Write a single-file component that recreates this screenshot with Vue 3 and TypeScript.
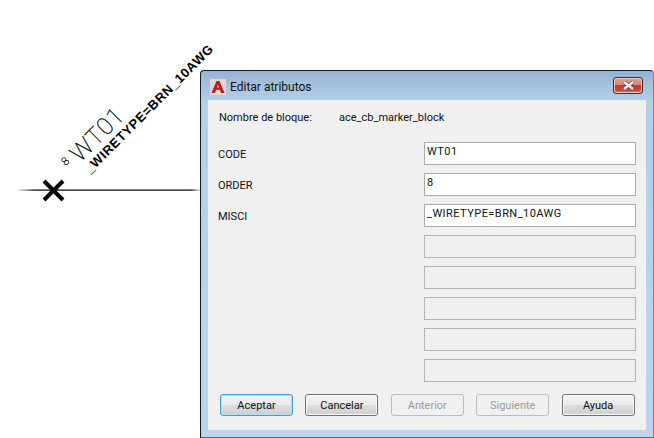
<script setup lang="ts">
const fields = [
  { label: 'CODE', value: 'WT01', enabled: true },
  { label: 'ORDER', value: '8', enabled: true },
  { label: 'MISCI', value: '_WIRETYPE=BRN_10AWG', enabled: true },
  { label: '', value: '', enabled: false },
  { label: '', value: '', enabled: false },
  { label: '', value: '', enabled: false },
  { label: '', value: '', enabled: false },
  { label: '', value: '', enabled: false },
]
const buttons = [
  { text: 'Aceptar', kind: 'primary' },
  { text: 'Cancelar', kind: '' },
  { text: 'Anterior', kind: 'disabled' },
  { text: 'Siguiente', kind: 'disabled' },
  { text: 'Ayuda', kind: '' },
]
</script>

<template>
  <div class="desk">
    <svg class="drawing" width="654" height="438" viewBox="0 0 654 438">
      <defs>
        <linearGradient id="wire" x1="0" x2="1" y1="0" y2="0">
          <stop offset="0" stop-color="#000" stop-opacity="0" />
          <stop offset="0.1" stop-color="#000" />
          <stop offset="0.95" stop-color="#000" />
          <stop offset="1" stop-color="#000" stop-opacity="0.2" />
        </linearGradient>
      </defs>
      <rect x="16" y="189.5" width="184" height="1.2" fill="url(#wire)" />
      <path d="M44 181 L63 200 M63 181 L44 200" stroke="#000" stroke-width="4" fill="none" />
      <text class="small8" transform="translate(65.7 166) rotate(-45)">8</text>
      <text class="wt" transform="translate(80 163) rotate(-45)">WT01</text>
      <text class="wire" transform="translate(90 174) rotate(-45)">_WIRETYPE=BRN_10AWG</text>
    </svg>

    <section class="window">
      <header class="titlebar">
        <svg class="logo" width="16" height="16" viewBox="0 0 16 16">
          <rect width="16" height="16" fill="#e8d3d3" />
          <path d="M1.5 14 L6.5 2 H9.5 L14.5 14 H11 L9.8 10.8 H6.2 L5 14 Z M7 8.6 H9 L8 5.8 Z" fill="#b5201e" fill-rule="evenodd" />
        </svg>
        <span class="title">Editar atributos</span>
        <button class="close" type="button" aria-label="Cerrar">
          <svg width="13" height="9" viewBox="0 0 13 9">
            <path d="M2 1 L11 8 M11 1 L2 8" stroke="#5d3a38" stroke-width="3.6" />
            <path d="M2 1 L11 8 M11 1 L2 8" stroke="#f3f1f1" stroke-width="2.4" />
          </svg>
        </button>
      </header>

      <div class="client">
        <div class="block-row">
          <span class="block-label">Nombre de bloque:</span>
          <span>ace_cb_marker_block</span>
        </div>
        <div class="fields">
          <div v-for="(f, i) in fields" :key="i" class="field-row">
            <span class="field-label">{{ f.label }}</span>
            <div class="input" :class="{ off: !f.enabled }">{{ f.value }}</div>
          </div>
        </div>
        <div class="buttons">
          <button v-for="b in buttons" :key="b.text" type="button" class="btn" :class="b.kind">{{ b.text }}</button>
        </div>
      </div>
    </section>
  </div>
</template>

<style scoped>
.desk {
  position: relative;
  width: 654px;
  height: 438px;
  overflow: hidden;
  background: #fff;
  font-family: Roboto, "Liberation Sans", Arial, sans-serif;
  font-size: 11px;
  color: #111;
}
.drawing {
  position: absolute;
  left: 0;
  top: 0;
}
.small8 {
  font-family: Roboto, sans-serif;
  font-weight: 100;
  font-size: 11px;
  fill: #000;
  stroke: #000;
  stroke-width: 0.3;
}
.wt {
  font-family: Roboto, sans-serif;
  font-weight: 100;
  font-size: 24px;
  letter-spacing: 0.5px;
  fill: #000;
  stroke: #000;
  stroke-width: 0.3;
}
.wire {
  font-family: "Liberation Sans", sans-serif;
  font-size: 13px;
  font-weight: 700;
  letter-spacing: 0.65px;
  fill: #000;
}
.window {
  position: absolute;
  left: 200px;
  top: 70px;
  width: 454px;
  height: 368px;
  box-sizing: border-box;
  border: 1px solid #0f1b22;
  border-right-color: #1aa4d8;
  border-bottom-color: #0d7fa8;
  border-radius: 4px 4px 0 0;
  background: linear-gradient(#96b4d2 0, #b4cfe8 30px, #bcd5ec 100%);
  display: flex;
  flex-direction: column;
  padding: 0 7px 7px;
}
.titlebar {
  height: 29px;
  flex: none;
  display: flex;
  align-items: center;
  gap: 4px;
  padding: 2px 0 0 2px;
  box-sizing: border-box;
}
.logo {
  flex: none;
}
.title {
  flex: 1;
  font-size: 12px;
  color: #111;
}
.close {
  width: 30px;
  height: 17px;
  margin: -2px 3px 0 0;
  padding: 0;
  box-sizing: border-box;
  border: 1px solid #4e2b2b;
  border-radius: 3px;
  background: linear-gradient(#dc9a8f 0, #d68a7e 45%, #b8412f 50%, #c24a36 80%, #d47a66 100%);
  box-shadow: inset 0 0 0 1px #eec9c2;
  display: flex;
  align-items: center;
  justify-content: center;
}
.client {
  flex: 1;
  background: #f0f0f0;
  display: flex;
  flex-direction: column;
  padding: 0 10px 0 10px;
  box-sizing: border-box;
}
.block-row {
  display: flex;
  height: 35px;
  align-items: center;
  flex: none;
  padding: 0 0 0 1px;
}
.block-label {
  width: 120px;
}
.fields {
  margin-top: 7px;
  display: flex;
  flex-direction: column;
  gap: 8px;
}
.field-row {
  display: flex;
  align-items: center;
  height: 23px;
}
.field-label {
  width: 206px;
  flex: none;
  padding-top: 1px;
}
.input {
  width: 212px;
  height: 23px;
  box-sizing: border-box;
  border: 1px solid #ababab;
  background: #fff;
  padding: 0 2px;
  line-height: 18px;
  letter-spacing: 0.45px;
  color: #111;
}
.input.off {
  background: #f0f0f0;
  border-color: #b5b5b5;
}
.buttons {
  margin-top: 12px;
  padding-left: 2px;
  display: flex;
  gap: 12.4px;
}
.btn {
  width: 73px;
  height: 22px;
  padding: 0;
  box-sizing: border-box;
  border: 1px solid #707070;
  border-radius: 3px;
  background: linear-gradient(#f3f3f3 0, #ebebeb 48%, #dcdcdc 52%, #cfcfcf 100%);
  box-shadow: inset 0 0 0 1px #f8f8f8;
  font: inherit;
  color: #111;
}
.btn.primary {
  border-color: #3c9fcf;
  box-shadow: inset 0 0 0 1px #a8e4f8;
}
.btn.disabled {
  background: #f0f0f0;
  border-color: #bcbcbc;
  box-shadow: none;
  color: #9a9a9a;
}
</style>
